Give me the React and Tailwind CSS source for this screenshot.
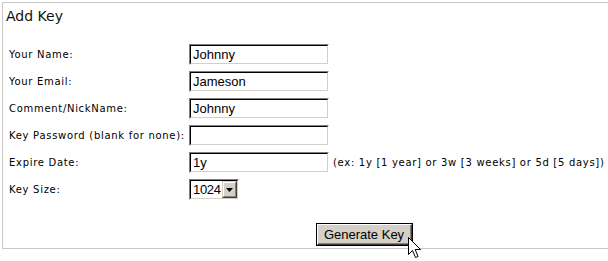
import React from "react";

function TextBox({ value, width = 140 }) {
  return (
    <div className="border-t border-l border-t-[#808080] border-l-[#808080] border-b border-r border-b-white border-r-white" style={{ width }}>
      <div className="h-[19px] border-t border-l border-t-[#000000] border-l-[#000000] border-b border-r border-b-[#d4d0c8] border-r-[#d4d0c8] bg-white flex items-center pl-[2px] text-[13px] leading-[15px] text-black font-['Liberation_Sans',Arial,sans-serif]">
        {value}
      </div>
    </div>
  );
}

function Row({ label, children }) {
  return (
    <div className="flex items-center h-[27px]">
      <div className="w-[180px] text-[10px] tracking-[0.7px] text-black font-['DejaVu_Sans',Verdana,sans-serif]">{label}</div>
      {children}
    </div>
  );
}

export default function App() {
  return (
    <div className="relative w-[608px] h-[261px] bg-white overflow-hidden">
      <div className="mt-[2px] ml-[2px] h-[247px] border-t border-l border-b border-[#c8c8c8]">
        <div className="h-[38px] pl-[3px] pt-[5px] text-[14px] leading-[17px] text-[#111] font-['DejaVu_Sans',Tahoma,sans-serif]">
          Add Key
        </div>
        <div className="pl-[6px]">
          <Row label="Your Name:"><TextBox value="Johnny" /></Row>
          <Row label="Your Email:"><TextBox value="Jameson" /></Row>
          <Row label="Comment/NickName:"><TextBox value="Johnny" /></Row>
          <Row label="Key Password (blank for none):"><TextBox value="" /></Row>
          <Row label="Expire Date:">
            <TextBox value="1y" />
            <span className="ml-[4px] text-[10px] tracking-[0.7px] text-black font-['DejaVu_Sans',Verdana,sans-serif]">
              (ex: 1y [1 year] or 3w [3 weeks] or 5d [5 days])
            </span>
          </Row>
          <Row label="Key Size:">
            <div className="w-[50px] border-t border-l border-t-[#808080] border-l-[#808080] border-b border-r border-b-white border-r-white">
              <div className="h-[19px] border-t border-l border-t-black border-l-black border-b border-r border-b-[#d4d0c8] border-r-[#d4d0c8] bg-white flex items-center">
                <span className="pl-[2px] flex-1 text-[13px] leading-[15px] tracking-[-0.3px] text-black font-['Liberation_Sans',Arial,sans-serif]">1024</span>
                <div className="w-[15px] h-[17px] bg-[#d4d0c8] border-t border-l border-t-[#d4d0c8] border-l-[#d4d0c8] border-b border-r border-b-[#404040] border-r-[#404040] flex items-center justify-center">
                  <div className="w-[13px] h-[15px] border-t border-l border-t-white border-l-white border-b border-r border-b-[#808080] border-r-[#808080] flex items-center justify-center">
                    <svg width="7" height="4" viewBox="0 0 7 4"><path d="M0 0H7L3.5 4Z" fill="#000" /></svg>
                  </div>
                </div>
              </div>
            </div>
          </Row>
          <div className="mt-[20px] ml-[307px]">
            <div className="w-[97px] h-[23px] border border-black">
              <div className="h-full border-t border-l border-t-white border-l-white border-b border-r border-b-[#404040] border-r-[#404040] bg-[#d4d0c8]">
                <div className="h-full border-b border-r border-b-[#808080] border-r-[#808080] flex items-center justify-center text-[13px] leading-[15px] text-black font-['Liberation_Sans',Arial,sans-serif]">
                  Generate Key
                </div>
              </div>
            </div>
          </div>
        </div>
      </div>
      <svg className="absolute left-[408px] top-[237px]" width="13" height="22" viewBox="0 0 13 22">
        <path d="M0.5 0.5V17.5L4.5 13.5L7.5 20.5L10 19.5L7.2 12.5H12.5Z" fill="#fff" stroke="#000" strokeWidth="1" strokeLinejoin="miter" />
      </svg>
    </div>
  );
}
